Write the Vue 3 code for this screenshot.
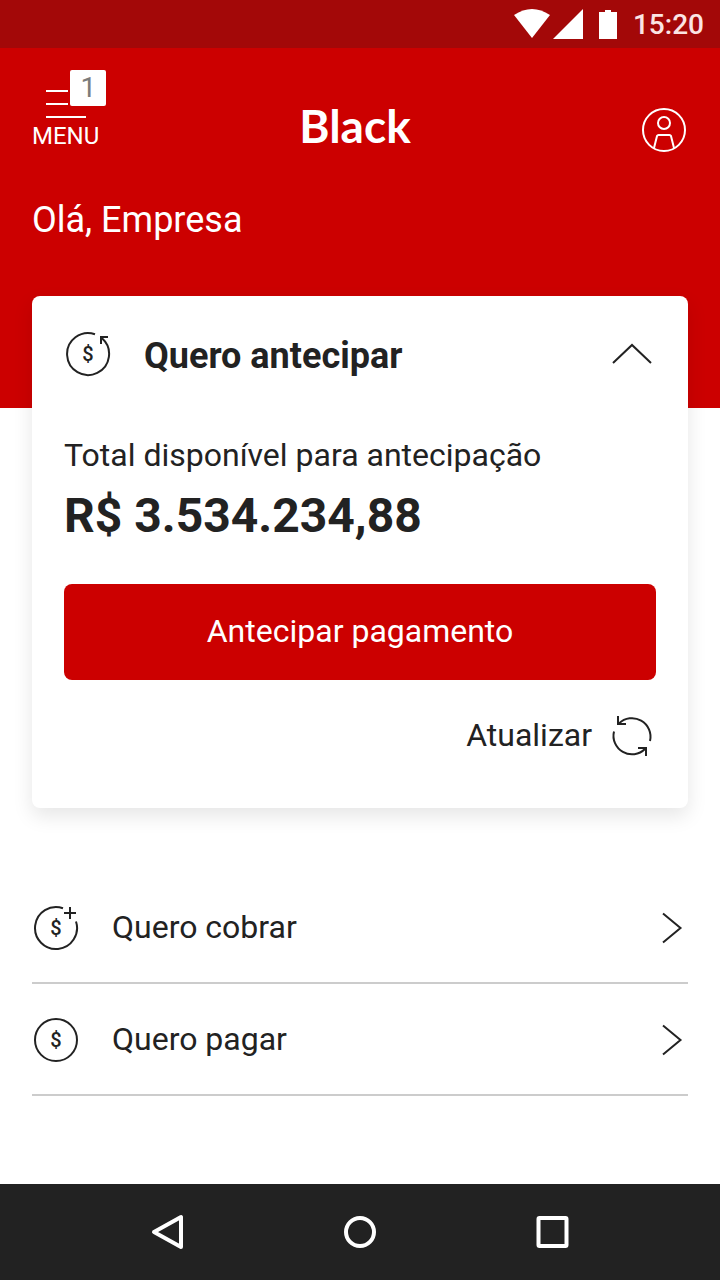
<script setup>
import { ref } from 'vue'

const open = ref(true)
const links = [
  { label: 'Quero cobrar', plus: true },
  { label: 'Quero pagar', plus: false },
]
</script>

<template>
  <div class="screen">
    <div class="status">
      <svg class="signals" width="106" height="32" viewBox="0 0 106 32" fill="#fff" aria-hidden="true">
        <path d="M0 7Q18-5 36 7L18 30Z" />
        <path d="M39 31L69 1V31Z" />
        <path d="M85 4H91V2H97V4H103V31H85Z" />
      </svg>
      <span class="time">15:20</span>
    </div>

    <header class="hero">
      <div class="bar">
        <button class="menu" type="button">
          <svg width="40" height="32" viewBox="0 0 40 32" fill="none" stroke="#fff" stroke-width="2" aria-hidden="true">
            <path d="M0 3H22M0 16H22M0 29H40" />
          </svg>
          <span class="menu-label">MENU</span>
          <span class="badge">1</span>
        </button>
        <span class="brand">Black</span>
        <button class="profile" type="button" aria-label="Perfil">
          <svg width="48" height="48" viewBox="0 0 48 48" fill="none" stroke="#fff" stroke-width="2" aria-hidden="true">
            <circle cx="24" cy="24" r="21" />
            <circle cx="24" cy="17" r="6" />
            <path d="M14 42L17 30Q17.500 29 18.500 29H29.500Q30.500 29 31 30L34 42" />
          </svg>
        </button>
      </div>
      <p class="hello">Olá, Empresa</p>
    </header>

    <main class="content">
      <section class="card">
        <button class="card-head" type="button" :aria-expanded="open" @click="open = !open">
          <svg class="icon" width="48" height="48" viewBox="0 0 48 48" aria-hidden="true">
            <path d="M31 4.200A21 21 0 1 0 38 8.300L37 8M44 7H37V14" />
            <text x="24" y="31">$</text>
          </svg>
          <span class="card-title">Quero antecipar</span>
          <svg class="icon" width="48" height="48" viewBox="0 0 48 48" aria-hidden="true">
            <path d="M5 33L24 15L43 33" />
          </svg>
        </button>
        <div v-if="open" class="card-body">
          <p class="caption">Total disponível para antecipação</p>
          <p class="amount">R$ 3.534.234,88</p>
          <button class="primary" type="button">Antecipar pagamento</button>
          <button class="refresh" type="button">
            <span class="refresh-label">Atualizar</span>
            <svg class="icon" width="48" height="48" viewBox="0 0 48 48" aria-hidden="true">
              <path d="M6 19.500A18.500 18.500 0 0 0 37 37M30 36H38V44" />
              <path d="M42 29A18.500 18.500 0 0 0 11 11.500M10 4V12H18" />
            </svg>
          </button>
        </div>
      </section>

      <nav class="links">
        <a v-for="item in links" :key="item.label" class="row" href="#">
          <svg class="icon" width="48" height="48" viewBox="0 0 48 48" aria-hidden="true">
            <path v-if="item.plus" d="M31 4.200A21 21 0 1 0 44 17.500M38 3V15M32 9H44" />
            <circle v-else cx="24" cy="24" r="21" />
            <text x="24" y="31">$</text>
          </svg>
          <span class="row-label">{{ item.label }}</span>
          <svg class="icon" width="48" height="48" viewBox="0 0 48 48" aria-hidden="true">
            <path d="M23 9.500L40.500 24L23 38.500" />
          </svg>
        </a>
      </nav>
    </main>

    <footer class="system">
      <button type="button" aria-label="Voltar">
        <svg width="48" height="48" viewBox="0 0 48 48" aria-hidden="true">
          <path d="M37 9V39L10 24Z" />
        </svg>
      </button>
      <button type="button" aria-label="Início">
        <svg width="48" height="48" viewBox="0 0 48 48" aria-hidden="true">
          <circle cx="24" cy="24" r="14" />
        </svg>
      </button>
      <button type="button" aria-label="Recentes">
        <svg width="48" height="48" viewBox="0 0 48 48" aria-hidden="true">
          <rect x="10.500" y="10" width="28" height="28" rx="1" />
        </svg>
      </button>
    </footer>
  </div>
</template>

<style>
body {
  background: #fff;
}
</style>

<style scoped>
.screen {
  display: flex;
  flex-direction: column;
  min-height: 100vh;
  color: #222;
  font-family: Roboto, sans-serif;
}
button {
  padding: 0;
  border: 0;
  background: none;
  color: inherit;
  font: inherit;
  cursor: pointer;
}
p {
  margin: 0;
}
svg {
  display: block;
  flex: none;
}
.status {
  display: flex;
  align-items: center;
  justify-content: flex-end;
  gap: 13px;
  height: 48px;
  padding-right: 16px;
  background: #a30808;
}
.time {
  padding-top: 2px;
  color: #fbe4e4;
  font-size: 28px;
  font-weight: 500;
  line-height: 32px;
}
.hero {
  padding: 32px 32px 168px;
  background: #c00;
  color: #fff;
}
.bar {
  display: grid;
  grid-template-columns: 1fr auto 1fr;
  align-items: end;
  height: 74px;
}
.menu {
  position: relative;
  display: flex;
  flex-direction: column;
  align-items: center;
  justify-self: start;
  padding-bottom: 2px;
}
.menu-label {
  font-size: 24px;
  line-height: 32px;
}
.badge {
  position: absolute;
  top: -18px;
  right: -7px;
  width: 36px;
  border-radius: 2px;
  background: #fff;
  color: #7b7b7b;
  font-size: 28px;
  line-height: 36px;
  text-align: center;
}
.brand {
  padding: 0 10px 4px 0;
  font-family: Lato, sans-serif;
  font-size: 46px;
  font-weight: 700;
  line-height: 48px;
}
.profile {
  justify-self: end;
}
.hello {
  margin-top: 46px;
  font-size: 36px;
  line-height: 40px;
}
.content {
  flex: 1;
  padding: 0 32px 32px;
}
.card {
  position: relative;
  margin-top: -112px;
  padding: 32px 32px 48px;
  border-radius: 8px;
  background: #fff;
  box-shadow: 0 8px 20px rgba(0, 0, 0, 0.1);
}
.card-head {
  display: flex;
  align-items: center;
  gap: 32px;
  width: 100%;
  text-align: left;
}
.card-title {
  flex: 1;
  padding-top: 4px;
  font-size: 36px;
  font-weight: 700;
  line-height: 48px;
}
.icon {
  fill: none;
  stroke: #222;
  stroke-width: 2;
}
.icon text {
  fill: #222;
  stroke: none;
  font-size: 20px;
  font-weight: 500;
  text-anchor: middle;
}
.card-body {
  display: flex;
  flex-direction: column;
}
.caption {
  margin-top: 55px;
  font-size: 32px;
  line-height: 40px;
}
.amount {
  margin-top: 13px;
  font-size: 48px;
  font-weight: 700;
  line-height: 56px;
}
.primary {
  margin-top: 40px;
  padding-bottom: 2px;
  border-radius: 8px;
  background: #c00;
  color: #fff;
  font-size: 32px;
  line-height: 94px;
}
.refresh {
  display: flex;
  align-items: center;
  align-self: flex-end;
  gap: 16px;
  margin-top: 32px;
  font-size: 32px;
}
.refresh-label {
  padding-bottom: 2px;
  line-height: 40px;
}
.links {
  margin-top: 64px;
}
.row {
  display: flex;
  align-items: center;
  gap: 32px;
  height: 108px;
  padding-top: 2px;
  border-bottom: 2px solid #ccc;
  color: inherit;
  font-size: 32px;
  text-decoration: none;
}
.row-label {
  flex: 1;
  padding-bottom: 2px;
  line-height: 40px;
}
.system {
  display: grid;
  grid-template-columns: repeat(3, 192px);
  align-items: center;
  justify-content: center;
  justify-items: center;
  height: 96px;
  background: #222;
}
.system svg {
  fill: none;
  stroke: #fff;
  stroke-width: 4;
  stroke-linejoin: round;
}
</style>
